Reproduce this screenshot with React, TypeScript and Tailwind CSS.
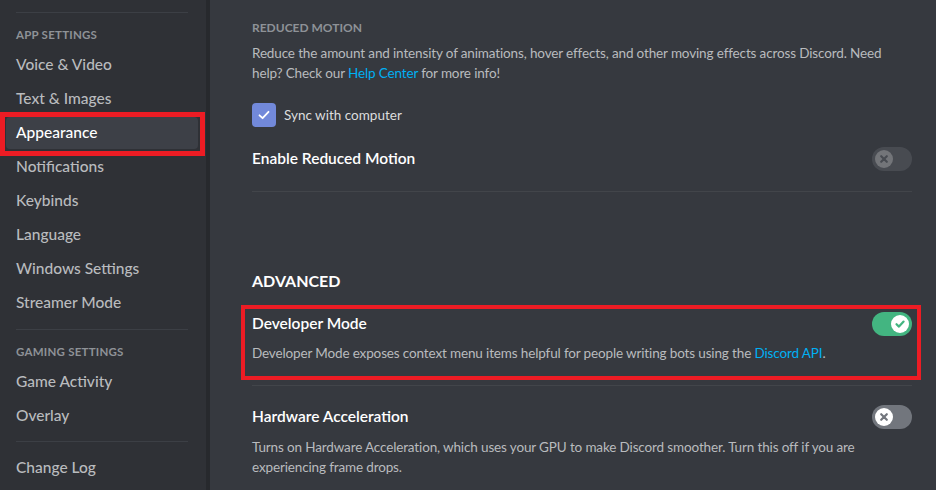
const font = { fontFamily: 'Lato, "Noto Sans", sans-serif' };

const SideItem = ({ label, active }: { label: string; active?: boolean }) => (
  <div
    className={`h-8 mb-[2px] flex items-center px-[10px] rounded text-[15.5px] font-medium ${
      active ? "bg-[#3d4047] text-white" : "text-[#b9bbbe]"
    }`}
  >
    {label}
  </div>
);

const SideHeader = ({ label }: { label: string }) => (
  <div className="px-[10px] h-4 flex items-center text-[11.5px] font-bold uppercase text-[#8e9297] tracking-[0.02em]">
    {label}
  </div>
);

const Toggle = ({ on, dim }: { on?: boolean; dim?: boolean }) => (
  <div
    className={`w-10 h-6 rounded-full flex items-center px-[3px] shrink-0 ${
      on ? "bg-[#43b581] justify-end" : "bg-[#72767d] justify-start"
    } ${dim ? "opacity-30" : ""}`}
  >
    <div className="w-[18px] h-[18px] rounded-full bg-white flex items-center justify-center">
      {on ? (
        <svg width="12" height="12" viewBox="0 0 12 12">
          <path d="M2.5 6.2 L5 8.6 L9.6 3.6" stroke="#43b581" strokeWidth="2.2" fill="none" strokeLinecap="round" strokeLinejoin="round" />
        </svg>
      ) : (
        <svg width="10" height="10" viewBox="0 0 10 10">
          <path d="M2.2 2.2 L7.8 7.8 M7.8 2.2 L2.2 7.8" stroke="#72767d" strokeWidth="2.2" strokeLinecap="round" />
        </svg>
      )}
    </div>
  </div>
);

const body = "text-[13.5px] leading-5 tracking-[-0.14px] text-[#b9bbbe]";
const title = "text-[15.5px] font-semibold text-white";

export default function App() {
  return (
    <div className="w-[936px] h-[490px] flex overflow-hidden bg-[#36393f]" style={font}>
      {/* sidebar */}
      <div className="w-[206px] shrink-0 bg-[#2f3136] pl-[6px] pr-[8px]">
        <div className="mt-3 mx-[10px] h-px bg-[#3c3f45]" />
        <div className="mt-[14px]">
          <SideHeader label="App Settings" />
        </div>
        <div className="mt-[6px]">
          <SideItem label="Voice & Video" />
          <SideItem label="Text & Images" />
          <div className="-ml-[6px] -mr-[7px] -mt-[5px] -mb-[5px] border-[5px] border-[#ed1c24] pl-[1px] pr-[2px]">
            <SideItem label="Appearance" active />
          </div>
          <SideItem label="Notifications" />
          <SideItem label="Keybinds" />
          <SideItem label="Language" />
          <SideItem label="Windows Settings" />
          <SideItem label="Streamer Mode" />
        </div>
        <div className="mt-[10px] mx-[10px] h-px bg-[#3c3f45]" />
        <div className="mt-[14px]">
          <SideHeader label="Gaming Settings" />
        </div>
        <div className="mt-[6px]">
          <SideItem label="Game Activity" />
          <SideItem label="Overlay" />
        </div>
        <div className="mt-[9px] mx-[10px] h-px bg-[#3c3f45]" />
        <div className="mt-[10px]">
          <SideItem label="Change Log" />
        </div>
      </div>
      <div className="w-1 shrink-0 bg-[#27292d]" />

      {/* content */}
      <div className="flex-1 pl-[42px] pr-[24px] pt-5">
        <div className="h-4 flex items-center text-[12px] font-bold uppercase text-[#8e9297]">
          Reduced Motion
        </div>
        <p className={`mt-[7px] ${body}`}>
          Reduce the amount and intensity of animations, hover effects, and other moving effects across Discord. Need
          <br />
          help? Check our <span className="text-[#00b0f4]">Help Center</span> for more info!
        </p>
        <div className="mt-5 flex items-center gap-2">
          <div className="w-6 h-6 rounded bg-[#7289da] flex items-center justify-center">
            <svg width="14" height="14" viewBox="0 0 14 14">
              <path d="M2.5 7.3 L5.6 10.2 L11.5 3.8" stroke="white" strokeWidth="1.8" fill="none" strokeLinecap="round" strokeLinejoin="round" />
            </svg>
          </div>
          <span className="text-[13.5px] text-[#dcddde]">Sync with computer</span>
        </div>
        <div className="mt-5 h-6 flex items-center justify-between">
          <span className={title}>Enable Reduced Motion</span>
          <Toggle dim />
        </div>
        <div className="mt-5 h-px bg-[#42454a]" />

        <div className="mt-[79px] h-5 flex items-center text-[16px] font-bold uppercase text-white">Advanced</div>

        <div className="mt-[14px] -ml-[11px] -mr-[9px] border-[4px] border-[#ed1c24] pl-[7px] pr-[5px] pt-[3px] pb-[13px]">
          <div className="h-6 flex items-center justify-between">
            <span className={title}>Developer Mode</span>
            <Toggle on />
          </div>
          <p className={`mt-[7px] ${body}`}>
            Developer Mode exposes context menu items helpful for people writing bots using the{" "}
            <span className="text-[#00b0f4]">Discord API</span>.
          </p>
        </div>
        <div className="mt-[5px] h-px bg-[#42454a]" />

        <div className="mt-[19px] h-6 flex items-center justify-between">
          <span className={title}>Hardware Acceleration</span>
          <Toggle />
        </div>
        <p className={`mt-2 ${body}`}>
          Turns on Hardware Acceleration, which uses your GPU to make Discord smoother. Turn this off if you are
          <br />
          experiencing frame drops.
        </p>
      </div>
    </div>
  );
}
